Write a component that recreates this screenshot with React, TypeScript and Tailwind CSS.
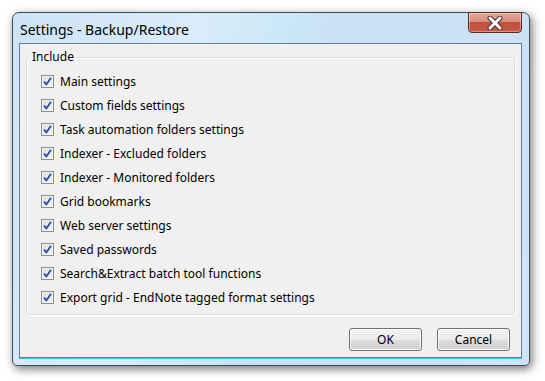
import React from 'react';

const items = [
  'Main settings',
  'Custom fields settings',
  'Task automation folders settings',
  'Indexer - Excluded folders',
  'Indexer - Monitored folders',
  'Grid bookmarks',
  'Web server settings',
  'Saved passwords',
  'Search&Extract batch tool functions',
  'Export grid - EndNote tagged format settings',
];

const CheckBox: React.FC = () => (
  <div className="w-[13px] h-[13px] border border-[#8e8f8f] bg-[linear-gradient(135deg,#dcdcdc,#f7f7f7)] flex items-center justify-center shrink-0">
    <div className="w-[11px] h-[11px] border border-[#f4f4f4] flex items-center justify-center">
      <svg width="9" height="9" viewBox="0 0 9 9">
        <path d="M1 4.5 L3.3 7.5 L8 0.8" stroke="#2b4aa6" strokeWidth="1.8" fill="none" strokeLinejoin="round" />
      </svg>
    </div>
  </div>
);

const Button: React.FC<{ label: string }> = ({ label }) => (
  <button className="w-[73px] h-[23px] rounded-[3px] border border-[#707070] bg-[linear-gradient(#f2f2f2_0%,#ebebeb_50%,#dddddd_51%,#cfcfcf_100%)] text-[12px] text-black shadow-[inset_0_0_0_1px_#fcfcfc]">
    {label}
  </button>
);

export default function App() {
  return (
    <div className="w-[545px] h-[381px] bg-white pl-[12px] pt-[12px] font-['Noto_Sans','Open_Sans',sans-serif]">
      <div className="relative w-[518px] h-[354px] rounded-t-[7px] rounded-b-[5px] border border-[#3f4a55] bg-[linear-gradient(105deg,#cde3f7_0%,#daecfa_30%,#cbe8f7_45%,#c9e0f5_55%,#cde3f7_100%)] shadow-[2px_3px_10px_rgba(0,0,0,0.55)] flex flex-col">
        <div className="h-[30px] pl-[7px] flex items-center">
          <span className="text-[14px] text-black pt-[2px]">Settings - Backup/Restore</span>
        </div>
        <div className="absolute top-[-1px] right-[7px] w-[54px] h-[21px] rounded-b-[4px] border border-[#5b2a22] bg-[linear-gradient(#e4aa9d_0%,#d88d7d_45%,#c2503c_50%,#c75a45_100%)] shadow-[inset_0_0_0_1px_rgba(255,255,255,0.35)] flex items-center justify-center">
          <svg width="18" height="14" viewBox="0 0 18 14">
            <path d="M4 2 L14 12 M14 2 L4 12" stroke="#4a2a25" strokeWidth="5" strokeLinecap="round" />
            <path d="M4 2 L14 12 M14 2 L4 12" stroke="#ffffff" strokeWidth="3" strokeLinecap="round" />
          </svg>
        </div>
        <div className="ml-[6px] mr-[7px] mb-[7px] flex-1 border border-[#6b7d90] bg-[#f0f0f0] flex flex-col text-[12px] text-black shadow-[0_1px_0_#3cc3ef]">
          <fieldset className="mx-[6px] mt-[6px] h-[265px] border border-[#d5dfe5] rounded-[3px] pl-[14px] pt-[11px] shadow-[inset_1px_1px_0_#ffffff,1px_1px_0_#ffffff]">
            <legend className="ml-[-11px] px-[2px] leading-[14px]">Include</legend>
            <div className="flex flex-col gap-[11px]">
              {items.map((it) => (
                <div key={it} className="flex items-center gap-[6px] h-[13px]">
                  <CheckBox />
                  <span className="leading-[13px]">{it}</span>
                </div>
              ))}
            </div>
          </fieldset>
          <div className="flex justify-end gap-[15px] mt-[13px] mr-[11px]">
            <Button label="OK" />
            <Button label="Cancel" />
          </div>
        </div>
      </div>
    </div>
  );
}
